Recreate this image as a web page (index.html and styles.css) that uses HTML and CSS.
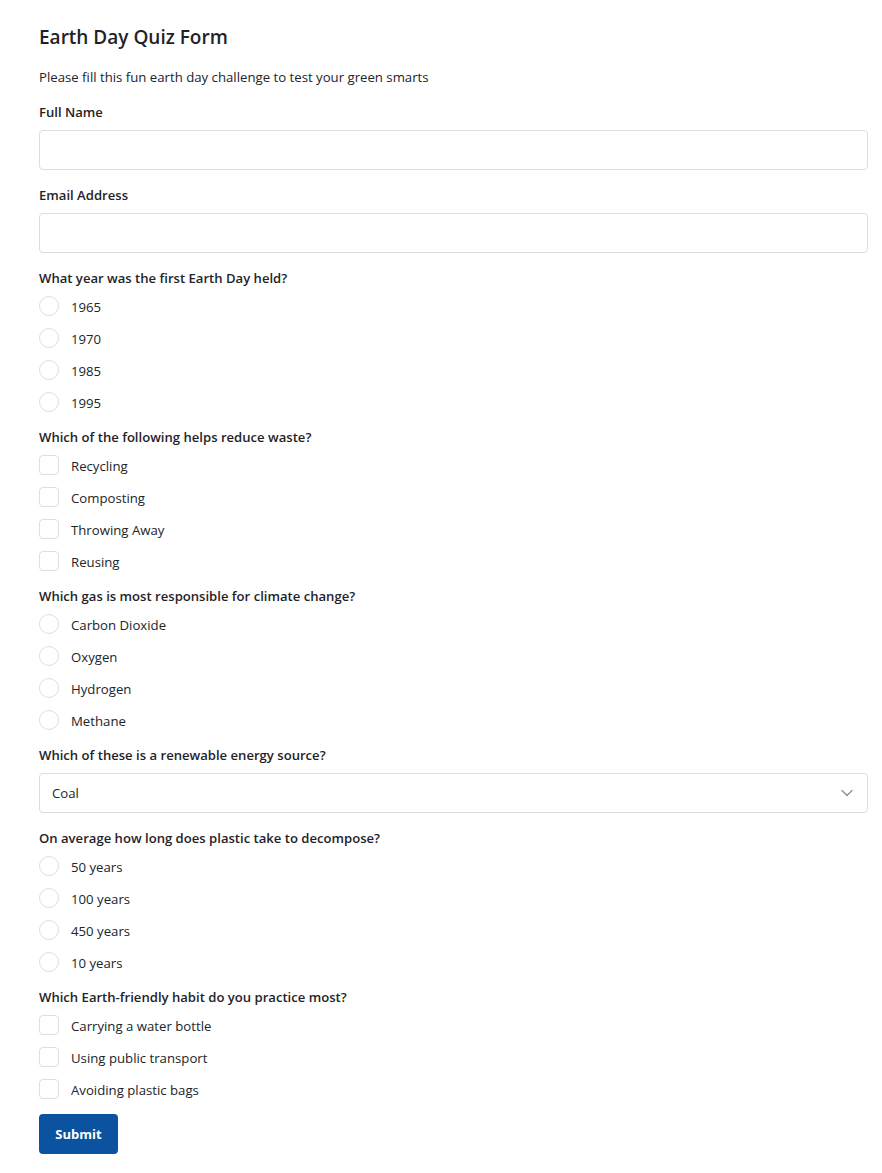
FILE: index.html
```html
<!DOCTYPE html>
<html lang="en">
<head>
<meta charset="utf-8">
<title>Earth Day Quiz Form</title>
<link rel="stylesheet" href="styles.css">
</head>
<body>
<main class="page">
  <h1 class="title">Earth Day Quiz Form</h1>
  <p class="subtitle">Please fill this fun earth day challenge to test your green smarts</p>
  <form class="form">
    <div class="field">
      <label class="field-label" for="name">Full Name</label>
      <input class="text-input" id="name" type="text">
    </div>
    <div class="field">
      <label class="field-label" for="email">Email Address</label>
      <input class="text-input" id="email" type="email">
    </div>
    <div class="field">
      <span class="field-label">What year was the first Earth Day held?</span>
      <div class="options">
        <label class="option"><input class="radio" type="radio" name="q1"><span class="option-text">1965</span></label>
        <label class="option"><input class="radio" type="radio" name="q1"><span class="option-text">1970</span></label>
        <label class="option"><input class="radio" type="radio" name="q1"><span class="option-text">1985</span></label>
        <label class="option"><input class="radio" type="radio" name="q1"><span class="option-text">1995</span></label>
      </div>
    </div>
    <div class="field">
      <span class="field-label">Which of the following helps reduce waste?</span>
      <div class="options">
        <label class="option"><input class="check" type="checkbox"><span class="option-text">Recycling</span></label>
        <label class="option"><input class="check" type="checkbox"><span class="option-text">Composting</span></label>
        <label class="option"><input class="check" type="checkbox"><span class="option-text">Throwing Away</span></label>
        <label class="option"><input class="check" type="checkbox"><span class="option-text">Reusing</span></label>
      </div>
    </div>
    <div class="field">
      <span class="field-label">Which gas is most responsible for climate change?</span>
      <div class="options">
        <label class="option"><input class="radio" type="radio" name="q3"><span class="option-text">Carbon Dioxide</span></label>
        <label class="option"><input class="radio" type="radio" name="q3"><span class="option-text">Oxygen</span></label>
        <label class="option"><input class="radio" type="radio" name="q3"><span class="option-text">Hydrogen</span></label>
        <label class="option"><input class="radio" type="radio" name="q3"><span class="option-text">Methane</span></label>
      </div>
    </div>
    <div class="field">
      <label class="field-label" for="energy">Which of these is a renewable energy source?</label>
      <div class="select-wrap">
        <select class="select" id="energy">
          <option>Coal</option>
          <option>Solar</option>
          <option>Natural Gas</option>
          <option>Oil</option>
        </select>
        <svg class="chevron" width="12" height="8" viewBox="0 0 12 8" aria-hidden="true"><path d="M1 1.5l5 5 5-5" fill="none" stroke="#8a8f95" stroke-width="1.3" stroke-linecap="round" stroke-linejoin="round"/></svg>
      </div>
    </div>
    <div class="field">
      <span class="field-label">On average how long does plastic take to decompose?</span>
      <div class="options">
        <label class="option"><input class="radio" type="radio" name="q5"><span class="option-text">50 years</span></label>
        <label class="option"><input class="radio" type="radio" name="q5"><span class="option-text">100 years</span></label>
        <label class="option"><input class="radio" type="radio" name="q5"><span class="option-text">450 years</span></label>
        <label class="option"><input class="radio" type="radio" name="q5"><span class="option-text">10 years</span></label>
      </div>
    </div>
    <div class="field">
      <span class="field-label">Which Earth-friendly habit do you practice most?</span>
      <div class="options">
        <label class="option"><input class="check" type="checkbox"><span class="option-text">Carrying a water bottle</span></label>
        <label class="option"><input class="check" type="checkbox"><span class="option-text">Using public transport</span></label>
        <label class="option"><input class="check" type="checkbox"><span class="option-text">Avoiding plastic bags</span></label>
      </div>
    </div>
    <div class="actions">
      <button class="submit" type="button">Submit</button>
    </div>
  </form>
</main>
</body>
</html>
```

FILE: styles.css
```css
* {
  box-sizing: border-box;
}

html, body {
  margin: 0;
  padding: 0;
  background: #ffffff;
}

body {
  font-family: "Open Sans", "Noto Sans", "Liberation Sans", sans-serif;
  color: #212529;
  font-size: 13px;
}

.page {
  padding: 25px 14px 0 39px;
}

.title {
  margin: 0;
  font-size: 19px;
  line-height: 24px;
  font-weight: 600;
  color: #1f2328;
}

.subtitle {
  margin: 19px 0 0;
  font-size: 13.2px;
  line-height: 18px;
}

.form {
  margin-top: 17px;
  display: flex;
  flex-direction: column;
  gap: 16px;
}

.field {
  display: flex;
  flex-direction: column;
  gap: 9px;
}

.field-label {
  font-size: 13.1px;
  line-height: 18px;
  font-weight: 600;
  color: #1f2328;
}

.text-input,
.select {
  display: block;
  width: 100%;
  height: 40px;
  border: 1px solid #dadde1;
  border-radius: 4px;
  background: #fff;
  font: inherit;
  font-size: 13.2px;
  color: #212529;
  padding: 0 12px;
  outline: none;
}

.select-wrap {
  position: relative;
}

.select {
  appearance: none;
  -webkit-appearance: none;
}

.chevron {
  position: absolute;
  right: 15px;
  top: 16px;
  pointer-events: none;
}

.options {
  display: flex;
  flex-direction: column;
  gap: 12px;
}

.option {
  display: flex;
  align-items: center;
  gap: 12px;
  height: 20px;
  font-size: 13.2px;
  line-height: 18px;
}

.option-text {
  padding-top: 1px;
}

.radio,
.check {
  appearance: none;
  -webkit-appearance: none;
  margin: 0;
  width: 20px;
  height: 20px;
  flex: none;
  border: 1px solid #dcdfe3;
  background: #fff;
}

.radio {
  border-radius: 50%;
}

.check {
  border-radius: 4px;
}

.actions {
  margin-top: -1px;
}

.submit {
  width: 79px;
  height: 40px;
  border: none;
  border-radius: 4px;
  background: #0b52a0;
  color: #fff;
  font: inherit;
  font-size: 13px;
  font-weight: 700;
  cursor: pointer;
}
```
